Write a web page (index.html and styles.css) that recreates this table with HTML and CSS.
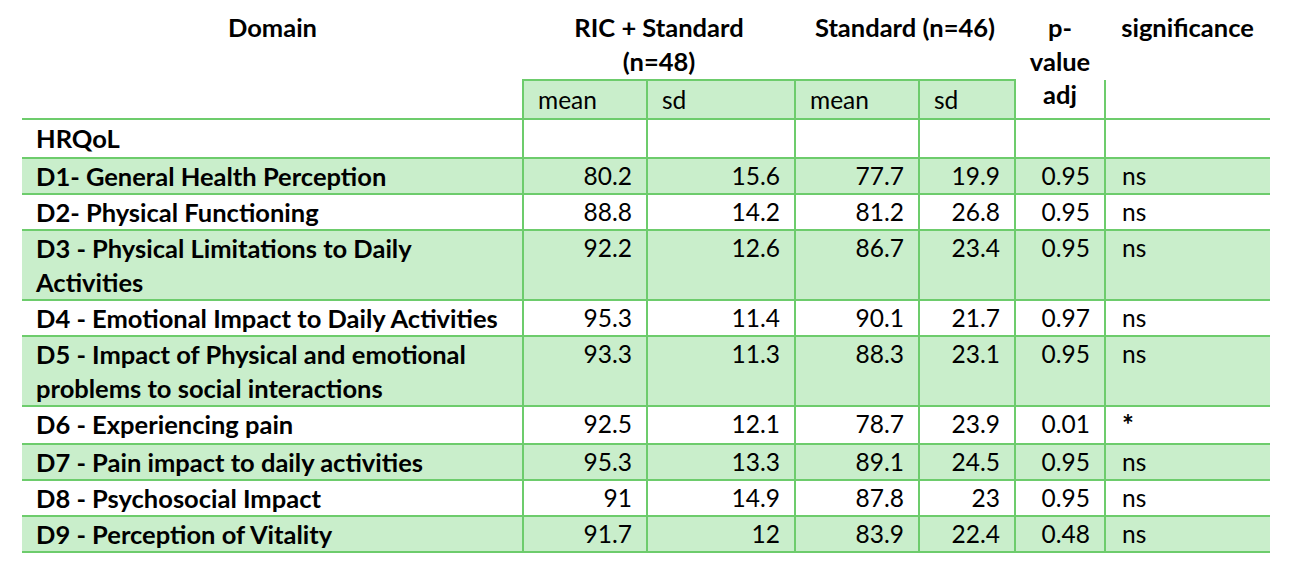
FILE: index.html
```html
<!DOCTYPE html>
<html>
<head>
<meta charset="utf-8">
<link rel="stylesheet" href="styles.css">
</head>
<body>
<table class="tbl">
  <colgroup>
    <col class="c-domain">
    <col class="c-mean1">
    <col class="c-sd1">
    <col class="c-mean2">
    <col class="c-sd2">
    <col class="c-p">
    <col class="c-sig">
  </colgroup>
  <thead>
    <tr class="h1">
      <th class="hc">Domain</th>
      <th class="hc" colspan="2">RIC + Standard<br>(n=48)</th>
      <th class="hc" colspan="2">Standard (n=46)</th>
      <th class="hc">p-<br>value</th>
      <th class="hc">significance</th>
    </tr>
    <tr class="h2">
      <th class="blank"></th>
      <th class="sub">mean</th>
      <th class="sub">sd</th>
      <th class="sub">mean</th>
      <th class="sub">sd</th>
      <th class="adj">adj</th>
      <th class="blank side"></th>
    </tr>
  </thead>
  <tbody>
    <tr class="sec"><td class="dom">HRQoL</td><td></td><td></td><td></td><td></td><td></td><td></td></tr>
    <tr class="g"><td class="dom">D1- General Health Perception</td><td class="n">80.2</td><td class="n">15.6</td><td class="n">77.7</td><td class="n">19.9</td><td class="n">0.95</td><td class="s">ns</td></tr>
    <tr><td class="dom">D2- Physical Functioning</td><td class="n">88.8</td><td class="n">14.2</td><td class="n">81.2</td><td class="n">26.8</td><td class="n">0.95</td><td class="s">ns</td></tr>
    <tr class="g"><td class="dom">D3 - Physical Limitations to Daily<br>Activities</td><td class="n">92.2</td><td class="n">12.6</td><td class="n">86.7</td><td class="n">23.4</td><td class="n">0.95</td><td class="s">ns</td></tr>
    <tr><td class="dom">D4 - Emotional Impact to Daily Activities</td><td class="n">95.3</td><td class="n">11.4</td><td class="n">90.1</td><td class="n">21.7</td><td class="n">0.97</td><td class="s">ns</td></tr>
    <tr class="g"><td class="dom">D5 - Impact of Physical and emotional<br>problems to social interactions</td><td class="n">93.3</td><td class="n">11.3</td><td class="n">88.3</td><td class="n">23.1</td><td class="n">0.95</td><td class="s">ns</td></tr>
    <tr><td class="dom">D6 - Experiencing pain</td><td class="n">92.5</td><td class="n">12.1</td><td class="n">78.7</td><td class="n">23.9</td><td class="n">0.01</td><td class="s"><span class="star">*</span></td></tr>
    <tr class="g"><td class="dom">D7 - Pain impact to daily activities</td><td class="n">95.3</td><td class="n">13.3</td><td class="n">89.1</td><td class="n">24.5</td><td class="n">0.95</td><td class="s">ns</td></tr>
    <tr><td class="dom">D8 - Psychosocial Impact</td><td class="n">91</td><td class="n">14.9</td><td class="n">87.8</td><td class="n">23</td><td class="n">0.95</td><td class="s">ns</td></tr>
    <tr class="g"><td class="dom">D9 - Perception of Vitality</td><td class="n">91.7</td><td class="n">12</td><td class="n">83.9</td><td class="n">22.4</td><td class="n">0.48</td><td class="s">ns</td></tr>
  </tbody>
</table>
</body>
</html>
```

FILE: styles.css
```css
html, body {
  margin: 0;
  padding: 0;
  background: #ffffff;
}

body {
  font-family: Lato, "Open Sans", sans-serif;
  font-size: 24.5px;
  color: #000000;
}

.tbl {
  margin: 0 0 0 22px;
  border-collapse: collapse;
  table-layout: fixed;
  width: 1248px;
}

.c-domain { width: 501px; }
.c-mean1 { width: 124px; }
.c-sd1 { width: 148px; }
.c-mean2 { width: 124px; }
.c-sd2 { width: 96px; }
.c-p { width: 90px; }
.c-sig { width: 165px; }

th, td {
  padding: 0 14px;
  line-height: 34px;
  vertical-align: top;
  text-align: left;
}

.h1 th {
  font-weight: 700;
  font-size: 25.5px;
  text-align: center;
  padding-top: 10px;
  padding-bottom: 1px;
  border: none;
}

.h2 th {
  padding-top: 2px;
  padding-bottom: 1px;
}

.h2 .sub {
  font-weight: 400;
  background: #c9eecb;
  border: 2px solid #6dcc6c;
  border-bottom: none;
}

.h2 .adj {
  font-weight: 700;
  font-size: 25.5px;
  text-align: center;
  padding-top: 0;
  line-height: 28px;
  border-left: 2px solid #6dcc6c;
  border-right: 2px solid #6dcc6c;
}

.h2 .blank {
  border: none;
}

.h2 .side {
  border-left: 2px solid #6dcc6c;
}

tbody td {
  border-top: 2px solid #6dcc6c;
  border-bottom: 2px solid #6dcc6c;
  border-left: 2px solid #6dcc6c;
}

tbody td:first-child {
  border-left: none;
}

tbody tr.sec td {
  padding-top: 1px;
  padding-bottom: 2px;
}

tbody tr.g td {
  background: #c9eecb;
}

.dom {
  font-weight: 700;
  font-size: 25.5px;
}

.n {
  text-align: right;
}

.s {
  padding-left: 16px;
}

.star {
  font-weight: 700;
  font-size: 28px;
}
```
